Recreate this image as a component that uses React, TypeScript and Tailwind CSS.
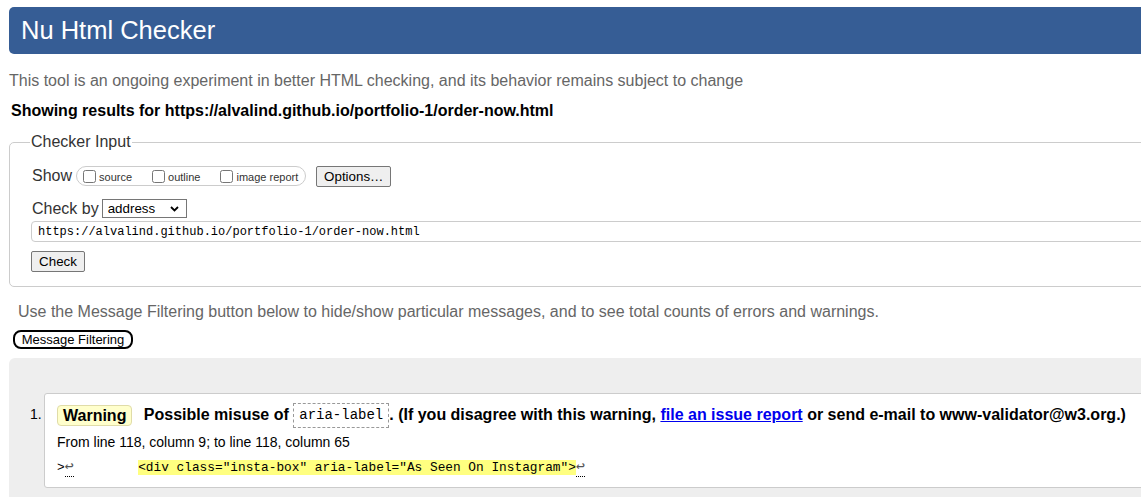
import React from 'react'

const App = () => {
  const options = ['source', 'outline', 'image report']

  return (
    <div className="w-[1141px] overflow-hidden bg-white font-['Liberation_Sans',Arial,sans-serif] text-black">
      <div className="w-[1200px]">
        {/* Header */}
        <div className="ml-[9px] mt-[7px] flex h-[47px] items-center rounded-l-[5px] bg-[#365d95] pl-[12px] text-[25.5px] text-white">
          Nu Html Checker
        </div>

        <p className="ml-[9px] mt-[18px] text-[16px] leading-[18px] text-[#666]">
          This tool is an ongoing experiment in better HTML checking, and its behavior remains subject to change
        </p>
        <p className="ml-[11px] mt-[12px] text-[16px] font-bold leading-[18px]">
          Showing results for https://alvalind.github.io/portfolio-1/order-now.html
        </p>

        {/* Checker Input */}
        <fieldset className="ml-[9px] mt-[13px] rounded-[5px] border border-[#ccc] pb-[14px] pl-[20px]">
          <legend className="px-[1px] text-[16px] leading-[18px] text-[#333]">Checker Input</legend>

          <div className="ml-[2px] mt-[14px] flex h-[22px] items-center">
            <span className="text-[16px] leading-[18px] text-[#333]">Show</span>
            <div className="ml-[4px] flex h-[20px] items-center gap-[20px] rounded-full border border-[#ccc] pl-[6px] pr-[7px]">
              {options.map((o) => (
                <label key={o} className="flex items-center gap-[3px] text-[11px] text-[#333]">
                  <input type="checkbox" className="m-0 h-[13px] w-[13px]" />
                  <span className="pt-[2px]">{o}</span>
                </label>
              ))}
            </div>
            <button className="ml-[10px] h-[21px] w-[75px] rounded-[2px] border border-[#767676] bg-[#efefef] text-[13.33px] leading-[19px]">
              Options…
            </button>
          </div>

          <div className="ml-[2px] mt-[12px] flex h-[19px] items-center">
            <span className="text-[16px] leading-[18px] text-[#333]">Check by</span>
            <div className="ml-[3px] flex h-[19px] w-[85px] items-center justify-between border border-[#767676] bg-white pl-[5px] pr-[7px] text-[13.33px]">
              <span>address</span>
              <svg width="9" height="6" viewBox="0 0 9 6">
                <path d="M1 1 L4.5 4.5 L8 1" fill="none" stroke="#000" strokeWidth="1.8" />
              </svg>
            </div>
          </div>

          <div className="ml-[1px] mt-[3px] flex h-[21px] items-center rounded-l-[4px] border border-[#ccc] pl-[6px] font-['Liberation_Mono',monospace] text-[12px]">
            https://alvalind.github.io/portfolio-1/order-now.html
          </div>

          <button className="ml-[1px] mt-[9px] block h-[21px] w-[54px] rounded-[2px] border border-[#767676] bg-[#efefef] text-[13.33px] leading-[19px]">
            Check
          </button>
        </fieldset>

        <p className="ml-[18px] mt-[16px] text-[16px] leading-[18px] text-[#666]">
          Use the Message Filtering button below to hide/show particular messages, and to see total counts of errors and warnings.
        </p>
        <button className="ml-[13px] mt-[9px] block h-[19px] w-[120px] rounded-[8px] border-2 border-black bg-white text-[13px] leading-[15px]">
          Message Filtering
        </button>

        {/* Results */}
        <div className="ml-[9px] mt-[9px] flex rounded-tl-[6px] bg-[#eee] pb-[20px] pl-[21px] pt-[35px]">
          <span className="w-[14px] pt-[13px] text-[14px] leading-[16px]">1.</span>
          <div className="flex-1 rounded-[3px] border border-[#ccc] bg-white pb-[11px] pl-[12px] pt-[8px]">
            <div className="h-[25px] whitespace-nowrap text-[16px] font-bold leading-[25px]">
              <span className="mr-[7px] inline-block h-[21px] rounded-[4px] border border-[#e0dca8] bg-[#ffffcc] px-[5px] align-middle leading-[19px]">
                Warning
              </span>{' '}
              Possible misuse of{' '}
              <code className="inline-block h-[25px] border border-dashed border-[#999] px-[5px] align-middle font-['Liberation_Mono',monospace] text-[14px] font-normal leading-[23px]">
                aria-label
              </code>
              . (If you disagree with this warning,{' '}
              <a href="#" className="text-[#00e] underline">
                file an issue report
              </a>{' '}
              or send e-mail to www-validator@w3.org.)
            </div>
            <p className="mt-[7px] text-[14px] leading-[17px]">From line 118, column 9; to line 118, column 65</p>
            <p className="mt-[9px] whitespace-pre font-['Liberation_Mono','DejaVu_Sans_Mono',monospace] text-[12.8px] leading-[16px]">
              {'>'}
              <span className="border-b border-dotted border-black text-[15px] text-[#555]">↩</span>
              {'        '}
              <span className="ml-[3px] bg-[#ffff80]">{'<div class="insta-box" aria-label="As Seen On Instagram">'}</span>
              <span className="border-b border-dotted border-black text-[15px] text-[#555]">↩</span>
            </p>
          </div>
        </div>
      </div>
    </div>
  )
}

export default App
